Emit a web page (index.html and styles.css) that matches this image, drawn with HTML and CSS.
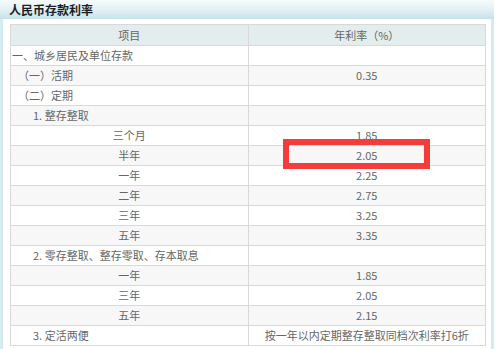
FILE: index.html
```html
<!DOCTYPE html>
<html lang="zh-CN">
<head>
<meta charset="utf-8">
<title>人民币存款利率</title>
<link rel="stylesheet" href="styles.css">
</head>
<body>
<div class="panel">
  <div class="panel-title">人民币存款利率</div>
  <div class="panel-body">
    <table class="rates">
      <thead>
        <tr><th>项目</th><th>年利率（%）</th></tr>
      </thead>
      <tbody>
        <tr><td class="l1">一、城乡居民及单位存款</td><td></td></tr>
        <tr><td class="l2">（一）活期</td><td>0.35</td></tr>
        <tr><td class="l2">（二）定期</td><td></td></tr>
        <tr><td class="l3">1. 整存整取</td><td></td></tr>
        <tr><td class="c">三个月</td><td>1.85</td></tr>
        <tr><td class="c">半年</td><td>2.05</td></tr>
        <tr><td class="c">一年</td><td>2.25</td></tr>
        <tr><td class="c">二年</td><td>2.75</td></tr>
        <tr><td class="c">三年</td><td>3.25</td></tr>
        <tr><td class="c">五年</td><td>3.35</td></tr>
        <tr><td class="l3">2. 零存整取、整存零取、存本取息</td><td></td></tr>
        <tr><td class="c">一年</td><td>1.85</td></tr>
        <tr><td class="c">三年</td><td>2.05</td></tr>
        <tr><td class="c">五年</td><td>2.15</td></tr>
        <tr><td class="l3">3. 定活两便</td><td>按一年以内定期整存整取同档次利率打6折</td></tr>
      </tbody>
    </table>
    <div class="highlight"></div>
  </div>
</div>
</body>
</html>
```
FILE: styles.css
```css
html, body {
  margin: 0;
  padding: 0;
  background: #ffffff;
}
body {
  font-family: "Noto Sans CJK SC", "Liberation Sans", sans-serif;
  font-size: 11px;
  color: #666666;
}
.panel {
  width: 494px;
}
.panel-title {
  height: 19px;
  line-height: 19px;
  padding-left: 9px;
  font-weight: bold;
  font-size: 12px;
  color: #1e1e1e;
  background: linear-gradient(to bottom, #f6fbfc 0%, #e6f2f5 45%, #c6e2ea 100%);
}
.panel-body {
  position: relative;
  border-left: 3px solid #d4ebf1;
  border-right: 3px solid #d4ebf1;
  padding: 5px 5px 10px 7px;
}
.rates {
  width: 476px;
  border-collapse: collapse;
  table-layout: fixed;
}
.rates th, .rates td {
  border: 1px solid #d9d9d9;
  padding: 0;
  height: 19px;
  line-height: 19px;
  text-align: center;
  font-weight: normal;
  white-space: nowrap;
  overflow: hidden;
}
.rates th {
  height: 20px;
  background: #e3eded;
  color: #666666;
}
.rates tbody tr:nth-child(even) td {
  background: #f7f7f7;
}
.rates tbody tr:nth-child(odd) td {
  background: #ffffff;
}
.rates td.l1 { text-align: left; padding-left: 1px; }
.rates td.l2 { text-align: left; padding-left: 7px; }
.rates td.l3 { text-align: left; padding-left: 22px; }
.highlight {
  position: absolute;
  left: 280px;
  top: 120px;
  width: 135px;
  height: 18px;
  border: 6px solid #f63b3b;
}
```
